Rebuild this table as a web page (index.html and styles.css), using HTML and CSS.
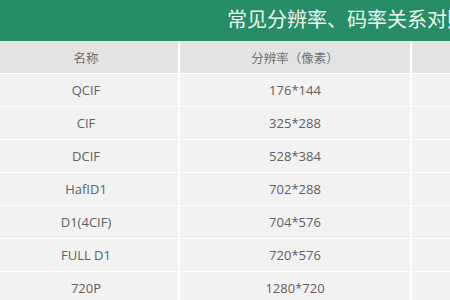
FILE: index.html
```html
<!DOCTYPE html>
<html lang="zh-CN">
<head>
<meta charset="utf-8">
<title>常见分辨率、码率关系对照表</title>
<link rel="stylesheet" href="styles.css">
</head>
<body>
<div class="page">
  <div class="title">常见分辨率、码率关系对照表</div>
  <table class="grid">
    <colgroup>
      <col class="c1"><col class="c2"><col class="c3">
    </colgroup>
    <thead>
      <tr><th class="first">名称</th><th>分辨率（像素）</th><th></th></tr>
    </thead>
    <tbody>
      <tr><td class="first">QCIF</td><td>176*144</td><td></td></tr>
      <tr><td class="first">CIF</td><td>325*288</td><td></td></tr>
      <tr><td class="first">DCIF</td><td>528*384</td><td></td></tr>
      <tr><td class="first">HafID1</td><td>702*288</td><td></td></tr>
      <tr><td class="first">D1(4CIF)</td><td>704*576</td><td></td></tr>
      <tr><td class="first">FULL D1</td><td>720*576</td><td></td></tr>
      <tr><td class="first">720P</td><td>1280*720</td><td></td></tr>
    </tbody>
  </table>
</div>
</body>
</html>
```
FILE: styles.css
```css
html, body {
  margin: 0;
  padding: 0;
  background: #ffffff;
}
.page {
  width: 450px;
  height: 300px;
  overflow: hidden;
  font-family: "Open Sans", "Noto Sans CJK SC", sans-serif;
}
.title {
  width: 450px;
  height: 41px;
  box-sizing: border-box;
  padding-left: 227px;
  line-height: 38px;
  background: #278d67;
  color: #eef6f2;
  font-family: "Noto Sans CJK SC", sans-serif;
  font-size: 20px;
  white-space: nowrap;
  overflow: hidden;
}
.grid {
  width: 450px;
  border-collapse: separate;
  border-spacing: 0;
  table-layout: fixed;
}
.c1 { width: 180px; }
.c2 { width: 232px; }
.c3 { width: 38px; }
.grid th,
.grid td {
  padding: 0;
  text-align: center;
  border-right: 2px solid #ffffff;
  border-bottom: 1.6px solid #ffffff;
  white-space: nowrap;
}
.grid th:last-child,
.grid td:last-child {
  border-right: 0;
}
.grid th {
  height: 32px;
  background: #e3e3e3;
  color: #707070;
  font-family: "Noto Sans CJK SC", sans-serif;
  font-weight: normal;
  font-size: 12.5px;
}
.grid td {
  height: 32px;
  background: #f2f2f2;
  color: #606060;
  font-size: 13px;
}
.grid .first {
  padding-right: 6px;
}
```
